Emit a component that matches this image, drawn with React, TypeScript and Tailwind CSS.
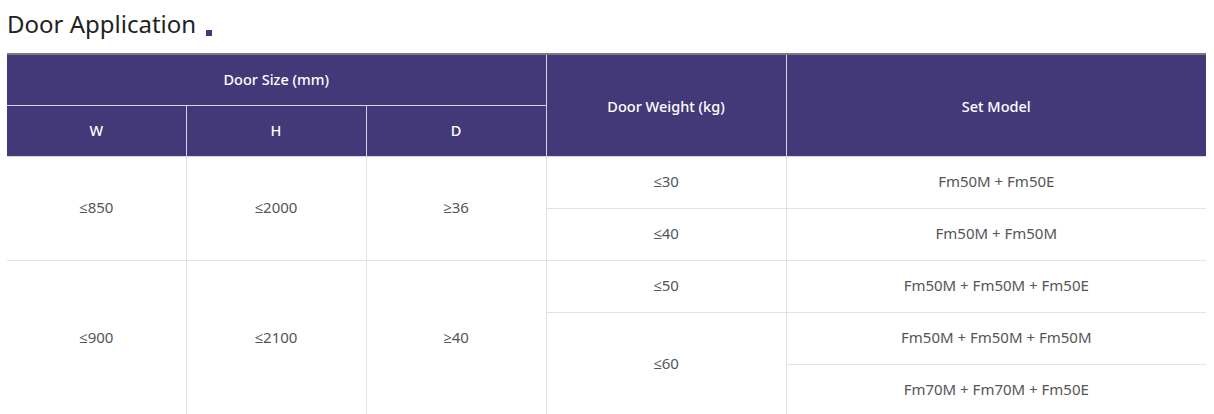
import React from 'react';

const font = { fontFamily: '"Noto Sans", "Open Sans", sans-serif' };

const rows = [
  { w: '≤850', h: '≤2000', d: '≥36', weights: [{ kg: '≤30', models: ['Fm50M + Fm50E'] }, { kg: '≤40', models: ['Fm50M + Fm50M'] }] },
  {
    w: '≤900',
    h: '≤2100',
    d: '≥40',
    weights: [
      { kg: '≤50', models: ['Fm50M + Fm50M + Fm50E'] },
      { kg: '≤60', models: ['Fm50M + Fm50M + Fm50M', 'Fm70M + Fm70M + Fm50E'] },
    ],
  },
];

const th = 'border border-[#d6d4e0] bg-[#433878] text-white text-[14.5px] font-medium text-center align-middle';
const td = 'border border-[#e2e2e2] text-[#555] text-[15px] text-center align-middle h-[52px] pb-[2px]';

const App = () => {
  const body: React.ReactNode[] = [];
  rows.forEach((g, gi) => {
    const total = g.weights.reduce((n, w) => n + w.models.length, 0);
    g.weights.forEach((wt, wi) => {
      wt.models.forEach((m, mi) => {
        body.push(
          <tr key={`${gi}-${wi}-${mi}`}>
            {wi === 0 && mi === 0 && (
              <>
                <td rowSpan={total} className={`${td} border-l-0`}>{g.w}</td>
                <td rowSpan={total} className={td}>{g.h}</td>
                <td rowSpan={total} className={td}>{g.d}</td>
              </>
            )}
            {mi === 0 && (
              <td rowSpan={wt.models.length} className={td}>
                {wt.kg}
              </td>
            )}
            <td className={`${td} border-r-0`}>{m}</td>
          </tr>
        );
      });
    });
  });

  return (
    <div className="bg-white px-[7px] pt-[8px]" style={font}>
      <h2 className="flex items-end text-[24px] leading-[32px] text-[#222] font-normal">
        Door Application
        <span className="ml-[10px] mb-[4px] inline-block w-[6px] h-[6px] bg-[#433878]" />
      </h2>
      <table className="mt-[13px] w-[1199px] table-fixed border-collapse border-t-2 border-t-[#7a7a7a]">
        <colgroup>
          <col className="w-[179px]" />
          <col className="w-[180px]" />
          <col className="w-[180px]" />
          <col className="w-[240px]" />
          <col className="w-[420px]" />
        </colgroup>
        <thead>
          <tr className="h-[51px]">
            <th colSpan={3} className={`${th} border-l-0 border-t-0`}>Door Size (mm)</th>
            <th rowSpan={2} className={`${th} border-t-0 pt-[3px]`}>Door Weight (kg)</th>
            <th rowSpan={2} className={`${th} border-r-0 border-t-0 pt-[3px]`}>Set Model</th>
          </tr>
          <tr className="h-[51px]">
            <th className={`${th} border-l-0`}>W</th>
            <th className={th}>H</th>
            <th className={th}>D</th>
          </tr>
        </thead>
        <tbody>{body}</tbody>
      </table>
    </div>
  );
};

export default App;
